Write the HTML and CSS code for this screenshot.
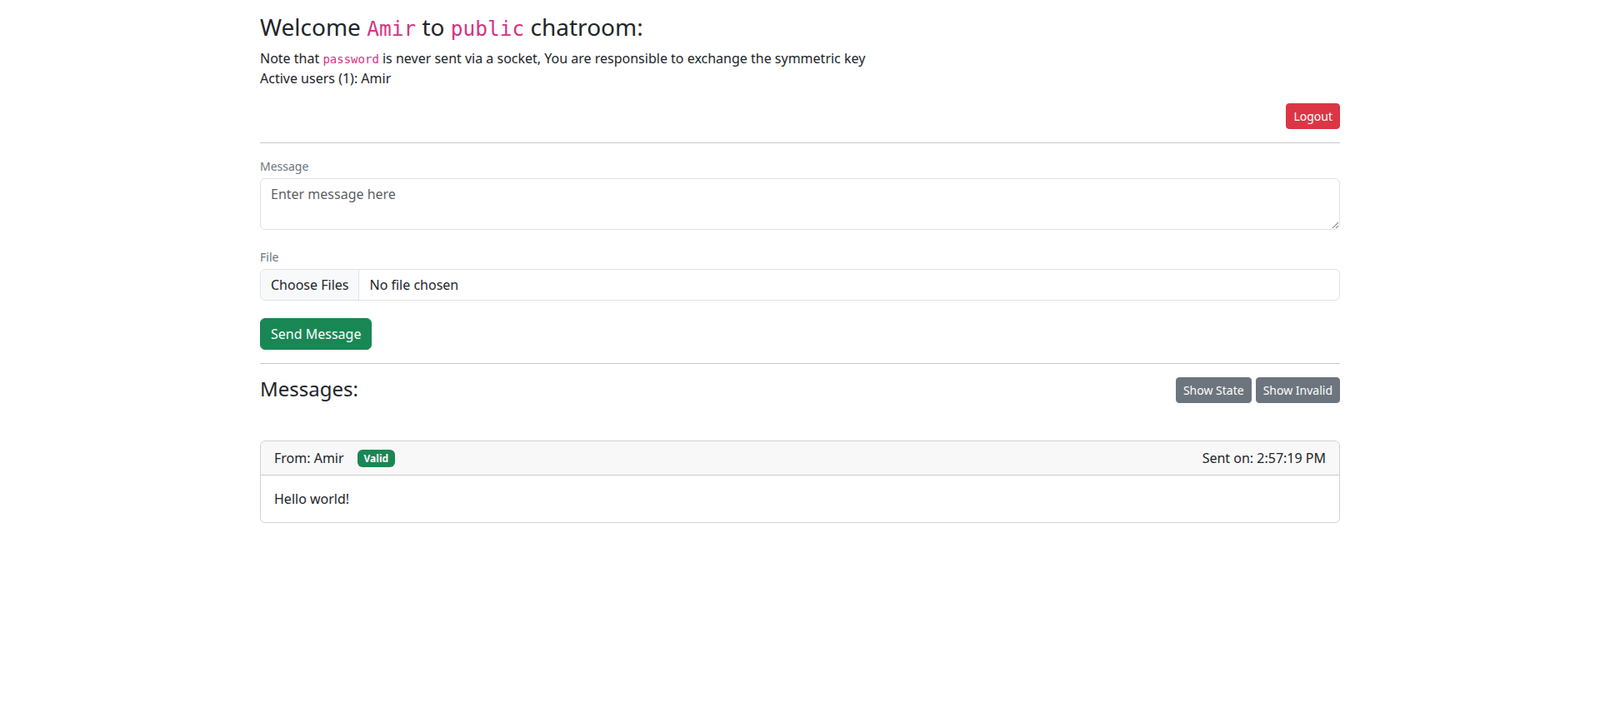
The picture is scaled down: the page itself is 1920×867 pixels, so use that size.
FILE: index.html
```html
<!DOCTYPE html>
<html>
<head>
    <meta charset="utf-8">
    <link rel="stylesheet" href="styles.css">
    <title>Chatroom</title>
</head>
<body>
    <div class="container">
        <h3 class="title">Welcome <code>Amir</code> to <code>public</code> chatroom:</h3>
        <p class="intro">
            Note that <code>password</code> is never sent via a socket, You are responsible to exchange the symmetric key<br>
            Active users (1): Amir
        </p>
        <div class="toolbar">
            <button class="btn btn-sm btn-danger">Logout</button>
        </div>
        <hr>

        <form class="send-form">
            <div class="field">
                <label for="message">Message</label>
                <textarea id="message" class="form-control" rows="2" placeholder="Enter message here"></textarea>
            </div>
            <div class="field">
                <label for="file">File</label>
                <input type="file" id="file" class="form-control" multiple>
            </div>
            <button type="button" class="btn btn-success">Send Message</button>
        </form>
        <hr>

        <div class="messages-head">
            <h4>Messages:</h4>
            <div class="actions">
                <button class="btn btn-sm btn-secondary">Show State</button>
                <button class="btn btn-sm btn-secondary">Show Invalid</button>
            </div>
        </div>

        <div class="card">
            <div class="card-header">
                <span>From: Amir <span class="badge">Valid</span></span>
                <span>Sent on: 2:57:19 PM</span>
            </div>
            <div class="card-body">Hello world!</div>
        </div>
    </div>
</body>
</html>
```

FILE: styles.css
```css
* {box-sizing: border-box;}
body {margin: 0; background: #fff; color: #212529; font-family: "Noto Sans", "Liberation Sans", sans-serif; font-size: 16px; line-height: 1.5;}
code {font-family: "DejaVu Sans Mono", "Liberation Mono", monospace; font-size: .875em; color: #d63384;}

.container {width: 1296px; margin: 0 auto; padding-top: 16px;}
.title {font-size: 28px; font-weight: 400; line-height: 1.2; margin: 0 0 8px;}
.intro {margin: 0 0 16px;}
.toolbar {display: flex; justify-content: flex-end; padding-top: 2px;}
hr {border: 0; border-top: 1px solid #212529; opacity: .25; margin: 16px 0;}

.field {margin-bottom: 21px;}
.field label {display: block; font-size: 14px; line-height: 24px; color: #6c757d; margin-bottom: 2px;}
.form-control {display: block; width: 100%; padding: 6px 12px; font: inherit; font-size: 16px; line-height: 1.5; color: #212529; background: #fff; border: 1px solid #dee2e6; border-radius: 6px;}
textarea.form-control {height: 62px; resize: vertical;}
.form-control::placeholder {color: rgba(33, 37, 41, .75);}
.form-control::file-selector-button {padding: 6px 12px; margin: -6px 12px -6px -12px; font: inherit; color: #212529; background: #f8f9fa; border: 0; border-right: 1px solid #dee2e6; border-radius: 0;}

.btn {display: inline-block; font-family: inherit; font-size: 16px; font-weight: 400; line-height: 1.5; padding: 6px 12px; border: 1px solid transparent; border-radius: 6px; color: #fff; cursor: pointer;}
.btn-sm {font-size: 14px; padding: 4px 8px; border-radius: 4px;}
.btn-danger {background: #dc3545; border-color: #dc3545;}
.btn-success {background: #198754; border-color: #198754;}
.btn-secondary {background: #6c757d; border-color: #6c757d;}

.messages-head {display: flex; justify-content: space-between; align-items: flex-start; margin-bottom: 45px;}
.messages-head h4 {font-size: 24px; font-weight: 400; line-height: 1.2; margin: 0;}
.actions {display: flex; gap: 5px;}

.card {border: 1px solid rgba(0, 0, 0, .175); border-radius: 6px; overflow: hidden;}
.card-header {display: flex; justify-content: space-between; padding: 8px 16px; background: rgba(33, 37, 41, .03); border-bottom: 1px solid rgba(0, 0, 0, .175);}
.card-body {padding: 16px;}
.badge {display: inline-block; margin-left: 12px; padding: 4.2px 7.8px; font-size: 12px; font-weight: 700; line-height: 1; color: #fff; background: #198754; border-radius: 6px; vertical-align: 1px;}
```
